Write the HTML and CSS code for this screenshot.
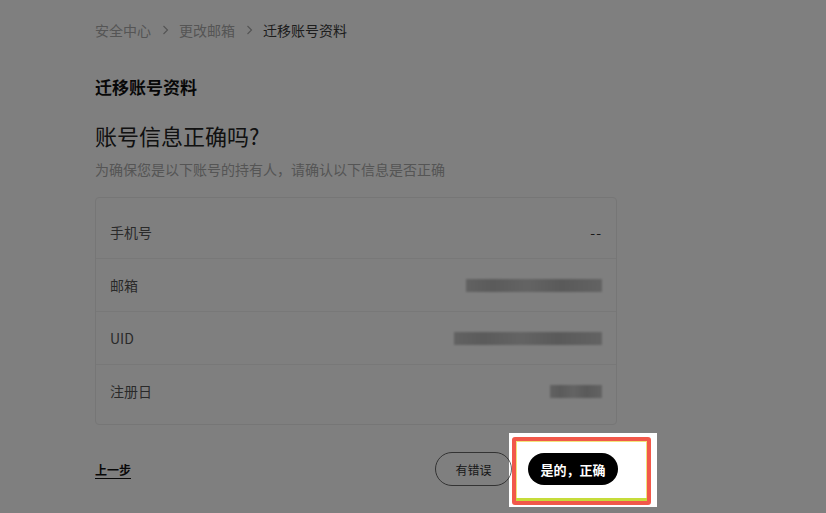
FILE: index.html
```html
<!DOCTYPE html>
<html lang="zh-CN">
<head>
<meta charset="utf-8">
<title>迁移账号资料</title>
<link rel="stylesheet" href="styles.css">
</head>
<body>
<main class="page">
  <nav class="crumbs">
    <span class="crumb">安全中心</span>
    <span class="sep"><svg width="7" height="10" viewBox="0 0 7 10"><path d="M1.5 1 L5.5 5 L1.5 9" fill="none" stroke="#aaa" stroke-width="1.2"/></svg></span>
    <span class="crumb">更改邮箱</span>
    <span class="sep"><svg width="7" height="10" viewBox="0 0 7 10"><path d="M1.5 1 L5.5 5 L1.5 9" fill="none" stroke="#aaa" stroke-width="1.2"/></svg></span>
    <span class="crumb current">迁移账号资料</span>
  </nav>

  <h1 class="title">迁移账号资料</h1>
  <h2 class="question">账号信息正确吗?</h2>
  <p class="hint">为确保您是以下账号的持有人，请确认以下信息是否正确</p>

  <section class="card">
    <div class="row"><span class="label">手机号</span><span class="value">--</span></div>
    <div class="row"><span class="label">邮箱</span><span class="blur blur-email"></span></div>
    <div class="row"><span class="label">UID</span><span class="blur blur-uid"></span></div>
    <div class="row"><span class="label">注册日</span><span class="blur blur-date"></span></div>
  </section>

  <footer class="actions">
    <a class="back">上一步</a>
    <div class="btns">
      <button class="btn btn-outline">有错误</button>
      <button class="btn btn-primary">是的，正确</button>
    </div>
  </footer>
</main>

<div class="spotlight">
  <div class="mark"><div class="mark-line"></div></div>
</div>
</body>
</html>
```

FILE: styles.css
```css
html, body {
  margin: 0;
  padding: 0;
  background: #fff;
  width: 826px;
  height: 513px;
  overflow: hidden;
  font-family: "Noto Sans CJK SC", "Noto Sans", sans-serif;
  color: #111;
}

.page {
  width: 523px;
  margin-left: 95px;
  padding-top: 20px;
}

.crumbs {
  display: flex;
  align-items: center;
  height: 20px;
  font-size: 14px;
  line-height: 20px;
}
.crumb { color: #aaa; }
.crumb.current { color: #3a3a3a; }
.sep {
  display: flex;
  align-items: center;
  margin: 0 10px 0 11px;
}

.title {
  margin: 35px 0 0;
  font-size: 17px;
  line-height: 24px;
  font-weight: 700;
  color: #111;
}

.question {
  margin: 21px 0 0;
  font-size: 22px;
  line-height: 30px;
  font-weight: 400;
  color: #222;
}

.hint {
  margin: 9px 0 0;
  font-size: 14px;
  line-height: 20px;
  color: #aaa;
}

.card {
  margin-top: 18px;
  width: 520px;
  border: 1px solid #ececec;
  border-radius: 4px;
  padding: 8px 0 7px;
}

.row {
  display: flex;
  align-items: center;
  justify-content: space-between;
  height: 52px;
  padding: 0 14px 0 14px;
  border-top: 1px solid #f1f1f1;
}
.row:first-child { border-top: none; }

.label {
  font-size: 14px;
  color: #555;
}
.value {
  font-size: 14px;
  color: #333;
  letter-spacing: 1px;
}

.blur {
  display: block;
  height: 13px;
  background: linear-gradient(90deg, #c4c4c4 0%, #b6b6b6 20%, #c8c8c8 45%, #b4b4b4 70%, #c6c6c6 100%);
  filter: blur(1.2px);
}
.blur-email { width: 136px; }
.blur-uid { width: 148px; }
.blur-date { width: 52px; }

.actions {
  margin-top: 27px;
  display: flex;
  align-items: center;
  justify-content: space-between;
  height: 34px;
}

.back {
  font-size: 12px;
  font-weight: 700;
  color: #111;
  text-decoration: underline;
  text-underline-offset: 3px;
}

.btns {
  display: flex;
  align-items: center;
  gap: 16px;
}

.btn {
  font-family: "Noto Sans CJK SC", "Noto Sans", sans-serif;
  border-radius: 17px;
  cursor: pointer;
}
.btn-outline {
  width: 77px;
  height: 34px;
  background: #fff;
  border: 1px solid #666;
  color: #333;
  font-size: 12px;
}
.btn-primary {
  width: 90px;
  height: 32px;
  background: #000;
  border: none;
  color: #fff;
  font-size: 13px;
  font-weight: 700;
}

/* annotation overlay: darkens the page except around the highlighted button */
.spotlight {
  position: absolute;
  left: 509px;
  top: 433px;
  width: 148px;
  height: 74px;
  box-shadow: 0 0 0 1200px rgba(0, 0, 0, 0.5);
  pointer-events: none;
}
.mark {
  position: absolute;
  left: 3px;
  top: 4px;
  right: 6px;
  bottom: 2px;
  border: 4px solid #f2584a;
  border-radius: 3px;
  box-shadow: inset 0 0 0 1px #f1e47a;
}
.mark-line {
  position: absolute;
  left: 0;
  right: 0;
  bottom: 0;
  height: 3px;
  background: #c6dc3a;
}
```
